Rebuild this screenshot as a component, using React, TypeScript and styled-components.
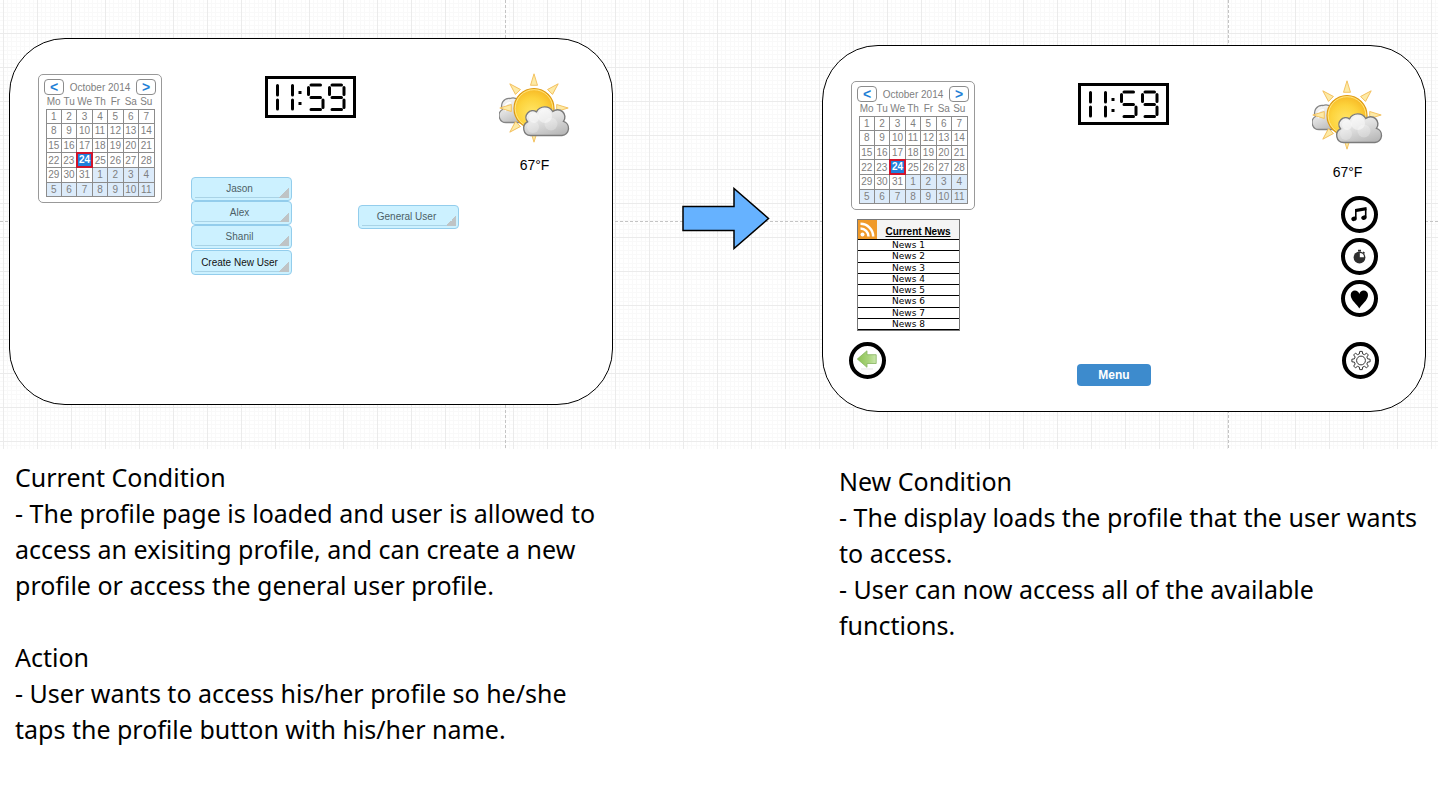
import React from "react";
import styled, { createGlobalStyle } from "styled-components";

const GlobalStyle = createGlobalStyle`
  * { box-sizing: border-box; }
  body {
    margin: 0;
    background: #fff;
    color: #000;
    font-family: "Liberation Sans", Arial, sans-serif;
  }
  button { font-family: inherit; cursor: pointer; }
`;

const minor = (dir: string) =>
  `linear-gradient(${dir}, ${[4, 8, 13, 17, 21, 26, 30]
    .map((p) => `transparent ${p}px, #f9f9f9 ${p}px, #f9f9f9 ${p + 1}px, transparent ${p + 1}px`)
    .join(", ")})`;

const Board = styled.section`
  display: flex;
  align-items: flex-start;
  padding: 38px 12px 37px 9px;
  background:
    repeating-linear-gradient(90deg, #c4c4c4 0 3px, transparent 3px 5px) 0 221px / 100% 1px no-repeat,
    repeating-linear-gradient(#c4c4c4 0 3px, transparent 3px 5px) 505px 0 / 1px 100% no-repeat,
    repeating-linear-gradient(#c4c4c4 0 3px, transparent 3px 5px) 1228px 0 / 1px 100% no-repeat,
    linear-gradient(90deg, #ebebeb 1px, transparent 1px) 3px 33px / 34px 34px,
    linear-gradient(#ebebeb 1px, transparent 1px) 3px 33px / 34px 34px,
    ${minor("90deg")} 3px 33px / 34px 34px,
    ${minor("180deg")} 3px 33px / 34px 34px,
    #fff;
`;

const Screen = styled.article<{ $lowered?: boolean }>`
  flex: 1;
  display: flex;
  flex-direction: column;
  justify-content: space-between;
  min-height: 367px;
  margin-top: ${(p) => (p.$lowered ? 7 : 0)}px;
  padding: 34px 42px 32px 28px;
  border: 1px solid #000;
  border-radius: 56px;
  background: #fff;
`;

const Columns = styled.div`
  display: flex;
  justify-content: space-between;
`;

const SideColumn = styled.div`
  display: flex;
  flex-direction: column;
  align-items: flex-start;
  gap: 9px;
  padding-top: 1px;
`;

const MiddleColumn = styled.div`
  flex: 1;
  display: flex;
  flex-direction: column;
  align-items: center;
  gap: 59px;
  padding-top: 3px;
`;

const WeatherColumn = styled.div`
  width: 111px;
  display: flex;
  flex-direction: column;
  align-items: flex-end;
  gap: 16px;
`;

const ArrowCell = styled.div`
  width: 209px;
  flex: none;
  padding: 149px 0 0 68px;
`;

/* Calendar */
const CalendarBox = styled.div`
  width: 124px;
  padding: 4px 5px 5px;
  border: 1px solid #999;
  border-radius: 5px;
  background: #fff;
  color: #808080;
  font-size: 10px;
`;

const CalendarBar = styled.div`
  display: flex;
  align-items: center;
  justify-content: space-between;
`;

const MonthButton = styled.button`
  width: 20px;
  height: 16px;
  padding: 0;
  border: 1px solid #8c8c8c;
  border-radius: 4px;
  background: #fff;
  color: #1f7fd6;
  font-size: 14px;
  font-weight: bold;
  line-height: 12px;
`;

const MonthTable = styled.table`
  width: 109px;
  height: 102px;
  margin: 0 auto;
  border-collapse: collapse;
  table-layout: fixed;
  text-align: center;
  line-height: 13px;
  th { height: 14px; padding: 0; font-weight: normal; line-height: 14px; }
`;

const Day = styled.td<{ $other?: boolean; $today?: boolean }>`
  padding: 0;
  border: ${(p) => (p.$today ? "2px solid #d0142c" : "1px solid #8c8c8c")};
  background: ${(p) => (p.$today ? "#1f80dd" : p.$other ? "#dcebfa" : "#fff")};
  color: ${(p) => (p.$today ? "#fff" : "inherit")};
  font-weight: ${(p) => (p.$today ? "bold" : "normal")};
  line-height: ${(p) => (p.$today ? 12 : 13)}px;
`;

const weekdays = ["Mo", "Tu", "We", "Th", "Fr", "Sa", "Su"];
const weeks = Array.from({ length: 6 }, (_, w) =>
  Array.from({ length: 7 }, (_, d) => {
    const n = w * 7 + d + 1;
    return { day: n > 31 ? n - 31 : n, other: n > 31, today: n === 24 };
  })
);

const Calendar = () => (
  <CalendarBox>
    <CalendarBar>
      <MonthButton aria-label="Previous month">&lt;</MonthButton>
      <span>October 2014</span>
      <MonthButton aria-label="Next month">&gt;</MonthButton>
    </CalendarBar>
    <MonthTable>
      <thead>
        <tr>{weekdays.map((d) => <th key={d} scope="col">{d}</th>)}</tr>
      </thead>
      <tbody>
        {weeks.map((week, i) => (
          <tr key={i}>
            {week.map((c) => (
              <Day key={c.day} $other={c.other} $today={c.today}>{c.day}</Day>
            ))}
          </tr>
        ))}
      </tbody>
    </MonthTable>
  </CalendarBox>
);

/* Clock */
const ClockFace = styled.svg`
  display: block;
  width: 91px;
  height: 42px;
`;

const Clock = () => (
  <ClockFace viewBox="0 0 91 42" role="img" aria-label="11:59">
    <rect x="1.5" y="1.5" width="88" height="39" fill="#fff" stroke="#000" strokeWidth="3" />
    <path
      d="M12.5 9.5V19M12.5 24V33M27.5 9.5V19M27.5 24V33
         M46 9H55.5M43.5 11.5V18.5M46 21.5H55.5M58 24V31.5M46 33.5H55.5
         M67 9H76.5M64.5 11.5V18.5M67 21.5H76.5M79 11.5V18.5M79 24V31.5M67 33.5H76.5"
      fill="none" stroke="#000" strokeWidth="3" strokeLinecap="round"
    />
    <path d="M33.5 15h3v3h-3zM33.5 26h3v3h-3z" />
  </ClockFace>
);

/* Weather */
const WeatherBox = styled.figure`
  width: 71px;
  margin: 0;
  text-align: center;
`;

const WeatherIcon = styled.svg`
  display: block;
  width: 71px;
  height: 71px;
`;

const Temperature = styled.figcaption`
  margin-top: 13px;
  font-size: 14px;
  line-height: 16px;
`;

const Weather = () => (
  <WeatherBox>
    <WeatherIcon viewBox="0 0 71 71" aria-hidden="true">
      <defs>
        <radialGradient id="sun" cx="45%" cy="60%" r="65%">
          <stop offset="0" stopColor="#ffe566" />
          <stop offset="0.55" stopColor="#fdd33c" />
          <stop offset="1" stopColor="#f6b321" />
        </radialGradient>
        <linearGradient id="cloud" x1="0.2" y1="0" x2="0.7" y2="1">
          <stop offset="0" stopColor="#fbfbfb" />
          <stop offset="0.5" stopColor="#dedede" />
          <stop offset="1" stopColor="#b9b9b9" />
        </linearGradient>
      </defs>
      <path d="M7 49.5A7 7 0 0 1 3.5 36.5A7.5 7.5 0 0 1 11 25.5Q16 23.5 21 28L27 49.5Z" fill="url(#cloud)" stroke="#858585" strokeWidth="1.3" />
      <path d="M7 38a5 5 0 0 1 5-8" fill="none" stroke="#fff" strokeWidth="1.5" />
      {[0, 45, 90, 135, 180, 225, 270, 315].map((a) => (
        <path key={a} d="M35 0.8L38.5 12.3H31.5Z" transform={`rotate(${a} 35 35)`} fill="#fdeaa6" stroke="#f2bd58" strokeWidth="0.9" />
      ))}
      <circle cx="35" cy="35.5" r="20" fill="url(#sun)" stroke="#dd9a16" strokeWidth="1.2" />
      <circle cx="35" cy="35.5" r="18.8" fill="none" stroke="#ffe98a" strokeWidth="0.9" />
      <path d="M31.5 62.5A7.3 7.3 0 0 1 28.5 48.8A6.8 6.8 0 0 1 37.5 38.8A9.3 9.3 0 0 1 53.8 38.5A7.3 7.3 0 0 1 64.5 48.3A7.3 7.3 0 0 1 63 62.5Z" fill="url(#cloud)" stroke="#7b7b7b" strokeWidth="1.4" />
      <circle cx="46" cy="43" r="7" fill="#fff" opacity="0.45" />
      <circle cx="35" cy="45" r="5" fill="#fff" opacity="0.45" />
      <circle cx="52" cy="51" r="6.5" fill="#fff" opacity="0.25" />
      <circle cx="34" cy="54" r="6" fill="#fff" opacity="0.25" />
    </WeatherIcon>
    <Temperature>67°F</Temperature>
  </WeatherBox>
);

/* Profile buttons */
const ProfileRow = styled.div`
  align-self: stretch;
  display: flex;
  justify-content: space-between;
  align-items: flex-start;
  padding-left: 29px;
`;

const ProfileList = styled.div<{ $offset?: boolean }>`
  display: flex;
  flex-direction: column;
  margin-top: ${(p) => (p.$offset ? 28 : 0)}px;
`;

const ProfileButton = styled.button<{ $action?: boolean }>`
  width: 101px;
  height: ${(p) => (p.$action ? 25 : 24)}px;
  margin-top: ${(p) => (p.$action ? 1 : 0)}px;
  padding: 0 4px 1px 0;
  border: 1px solid #93cdec;
  border-radius: 4px;
  background:
    linear-gradient(135deg, transparent 50%, #bfc4c6 50%) right 2px bottom 2px / 10px 10px no-repeat,
    linear-gradient(#a9d3e6, #a9d3e6) 3px calc(100% - 2px) / 93px 1px no-repeat,
    #ccf1ff;
  color: ${(p) => (p.$action ? "#111" : "#4d5f66")};
  font-size: 10px;
  white-space: nowrap;
`;

/* News */
const NewsBox = styled.section`
  width: 103px;
  margin-left: 6px;
  border: 1px solid #777;
  background: #fff;
`;

const NewsHeader = styled.header`
  display: flex;
  align-items: flex-end;
  height: 20px;
  border-bottom: 1px solid #000;
  background: #f4f4f4;
  svg { display: block; width: 19px; height: 19px; }
`;

const NewsTitle = styled.h2`
  flex: 1;
  margin: 0;
  text-align: center;
  font-size: 10px;
  line-height: 15px;
  text-decoration: underline;
  white-space: nowrap;
`;

const NewsList = styled.ul`
  display: grid;
  grid-template-rows: repeat(8, 1fr);
  height: 90px;
  margin: 0;
  padding: 0;
  list-style: none;
  font-family: "DejaVu Sans", Verdana, sans-serif;
  font-size: 9px;
  text-align: center;
`;

const NewsItem = styled.li`
  border-bottom: 1px solid #000;
  line-height: 10px;
`;

const News = () => (
  <NewsBox>
    <NewsHeader>
      <svg viewBox="0 0 19 19" aria-hidden="true">
        <rect width="19" height="19" fill="#f09a2a" />
        <circle cx="4.5" cy="14.5" r="2" fill="#fff" />
        <path d="M2.5 8.5A8 8 0 0 1 10.5 16.5M2.5 3.8A12.7 12.7 0 0 1 15.2 16.5" fill="none" stroke="#fff" strokeWidth="2.5" />
      </svg>
      <NewsTitle>Current News</NewsTitle>
    </NewsHeader>
    <NewsList>
      {[1, 2, 3, 4, 5, 6, 7, 8].map((n) => <NewsItem key={n}>News {n}</NewsItem>)}
    </NewsList>
  </NewsBox>
);

/* Round buttons */
const RoundButton = styled.button`
  display: block;
  width: 37px;
  height: 37px;
  padding: 0;
  border: 4px solid #000;
  border-radius: 50%;
  background: #fff;
  svg { display: block; width: 29px; height: 29px; }
`;

const RoundStack = styled.div`
  display: flex;
  flex-direction: column;
  gap: 5px;
  padding-right: 5px;
`;

const BottomBar = styled.footer`
  display: flex;
  justify-content: space-between;
  align-items: flex-end;
  margin: 0 4px 0 -2px;
`;

const MenuButton = styled.button`
  width: 74px;
  height: 22px;
  margin-bottom: -7px;
  padding: 0;
  border: 0;
  border-radius: 4px;
  background: #3d8bcd;
  color: #fff;
  font-size: 12px;
  font-weight: bold;
`;

const gearPath = (() => {
  const points: string[] = [];
  for (let i = 0; i < 8; i++) {
    const profile: [number, number][] = [[-14, 6.8], [-8, 9.2], [8, 9.2], [14, 6.8]];
    profile.forEach(([deg, r]) => {
      const a = ((i * 45 + deg) * Math.PI) / 180;
      points.push(`${(15 + r * Math.sin(a)).toFixed(2)} ${(14.5 - r * Math.cos(a)).toFixed(2)}`);
    });
  }
  return `M${points.join("L")}Z`;
})();

const MusicIcon = () => (
  <svg viewBox="0 0 29 29" aria-hidden="true">
    <path d="M10 9L21.5 7V10.2L10 12.2Z" />
    <path d="M10.8 10V18.5M20.7 8.5V17.5" stroke="#000" strokeWidth="1.6" />
    <ellipse cx="9" cy="18.8" rx="2.7" ry="2.2" transform="rotate(-20 9 18.8)" />
    <ellipse cx="18.9" cy="17.7" rx="2.7" ry="2.2" transform="rotate(-20 18.9 17.7)" />
  </svg>
);

const TimerIcon = () => (
  <svg viewBox="0 0 29 29" aria-hidden="true">
    <circle cx="14.5" cy="15.5" r="5.9" fill="#2e2e2e" />
    <path d="M14.8 15.2V11A4.3 4.3 0 0 1 19 15.2Z" fill="#fff" />
    <path d="M13 7.8h3v1.8h-3zM18.5 9.5l1.5 1.3-1 1-1.5-1.3z" fill="#2e2e2e" />
  </svg>
);

const HeartIcon = () => (
  <svg viewBox="0 0 29 29" aria-hidden="true">
    <path d="M14.3 24.5C12.5 20.5 5.7 16.5 5.7 11C5.7 8 7.7 6.5 9.9 6.5C12 6.5 13.7 7.8 14.3 10C14.9 7.8 16.6 6.5 18.7 6.5C21 6.5 23 8 23 11C23 16.5 16.2 20.5 14.3 24.5Z" />
  </svg>
);

const GearIcon = () => (
  <svg viewBox="0 0 29 29" aria-hidden="true">
    <path d={gearPath} fill="#fff" stroke="#333" strokeWidth="1" strokeLinejoin="round" />
    <circle cx="15" cy="14.5" r="4.4" fill="#fff" stroke="#333" strokeWidth="1" />
  </svg>
);

const BackIcon = () => (
  <svg viewBox="0 0 29 29" aria-hidden="true">
    <defs>
      <linearGradient id="leaf" x1="0" y1="0" x2="1" y2="0">
        <stop offset="0" stopColor="#8cc152" />
        <stop offset="0.6" stopColor="#a9d47c" />
        <stop offset="1" stopColor="#cbe8ae" />
      </linearGradient>
    </defs>
    <path d="M8 23H20" stroke="#e3e3e3" />
    <path d="M4.3 13L14 4.8V8.7H23.2V17.5H14V21.3Z" fill="url(#leaf)" stroke="#86b460" strokeWidth="0.8" />
  </svg>
);

/* Notes */
const Notes = styled.section`
  display: flex;
  justify-content: space-between;
  padding: 10px 8px 60px 15px;
`;

const Note = styled.div<{ $lowered?: boolean }>`
  flex: 0 1 ${(p) => (p.$lowered ? 591 : 599)}px;
  margin-top: ${(p) => (p.$lowered ? 4 : 0)}px;
  font-family: "Noto Sans", "Open Sans", sans-serif;
  font-size: 25px;
  line-height: 36px;
`;

const NoteTitle = styled.h2`
  margin: 0;
  font-size: inherit;
  font-weight: normal;
  p + & { margin-top: 36px; }
`;

const NoteText = styled.p`
  margin: 0;
`;

export default function App() {
  return (
    <main>
      <GlobalStyle />
      <Board>
        <Screen>
          <Columns>
            <SideColumn><Calendar /></SideColumn>
            <MiddleColumn>
              <Clock />
              <ProfileRow>
                <ProfileList>
                  <ProfileButton>Jason</ProfileButton>
                  <ProfileButton>Alex</ProfileButton>
                  <ProfileButton>Shanil</ProfileButton>
                  <ProfileButton $action>Create New User</ProfileButton>
                </ProfileList>
                <ProfileList $offset>
                  <ProfileButton>General User</ProfileButton>
                </ProfileList>
              </ProfileRow>
            </MiddleColumn>
            <WeatherColumn><Weather /></WeatherColumn>
          </Columns>
        </Screen>
        <ArrowCell>
          <svg width="90" height="63" viewBox="0 0 90 63" role="img" aria-label="leads to">
            <path d="M2 19.5H53V1.5L87.5 31.5L53 61.5V43.5H2Z" fill="#66b2ff" stroke="#000" strokeWidth="1.5" />
          </svg>
        </ArrowCell>
        <Screen $lowered>
          <Columns>
            <SideColumn>
              <Calendar />
              <News />
            </SideColumn>
            <MiddleColumn><Clock /></MiddleColumn>
            <WeatherColumn>
              <Weather />
              <RoundStack>
                <RoundButton aria-label="Music"><MusicIcon /></RoundButton>
                <RoundButton aria-label="Timer"><TimerIcon /></RoundButton>
                <RoundButton aria-label="Health"><HeartIcon /></RoundButton>
              </RoundStack>
            </WeatherColumn>
          </Columns>
          <BottomBar>
            <RoundButton aria-label="Back"><BackIcon /></RoundButton>
            <MenuButton>Menu</MenuButton>
            <RoundButton aria-label="Settings"><GearIcon /></RoundButton>
          </BottomBar>
        </Screen>
      </Board>
      <Notes>
        <Note>
          <NoteTitle>Current Condition</NoteTitle>
          <NoteText>
            - The profile page is loaded and user is allowed to access an exisiting profile, and can
            create a new profile or access the general user profile.
          </NoteText>
          <NoteTitle>Action</NoteTitle>
          <NoteText>
            - User wants to access his/her profile so he/she taps the profile button with his/her name.
          </NoteText>
        </Note>
        <Note $lowered>
          <NoteTitle>New Condition</NoteTitle>
          <NoteText>- The display loads the profile that the user wants to access.</NoteText>
          <NoteText>- User can now access all of the available functions.</NoteText>
        </Note>
      </Notes>
    </main>
  );
}
